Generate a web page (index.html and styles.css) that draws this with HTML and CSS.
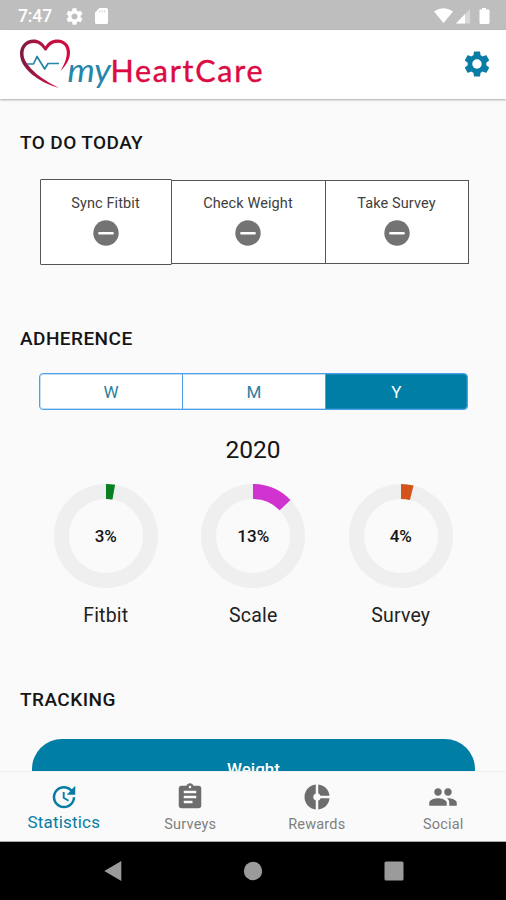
FILE: index.html
```html
<!DOCTYPE html>
<html lang="en">
<head>
<meta charset="utf-8">
<title>myHeartCare</title>
<link rel="stylesheet" href="styles.css">
</head>
<body>
<svg class="defs" width="0" height="0" aria-hidden="true">
  <symbol id="gear" viewBox="2 2 20 20"><path d="M19.14 12.94c.04-.3.06-.61.06-.94 0-.32-.02-.64-.07-.94l2.03-1.58c.18-.14.23-.41.12-.61l-1.92-3.32c-.12-.22-.37-.29-.59-.22l-2.39.96c-.5-.38-1.03-.7-1.62-.94l-.36-2.54c-.04-.24-.24-.41-.48-.41h-3.84c-.24 0-.43.17-.47.41l-.36 2.54c-.59.24-1.13.57-1.62.94l-2.39-.96c-.22-.08-.47 0-.59.22L2.74 8.87c-.12.21-.08.47.12.61l2.03 1.58c-.05.3-.09.63-.09.94s.02.64.07.94l-2.03 1.58c-.18.14-.23.41-.12.61l1.92 3.32c.12.22.37.29.59.22l2.39-.96c.5.38 1.03.7 1.62.94l.36 2.54c.05.24.24.41.48.41h3.84c.24 0 .44-.17.47-.41l.36-2.54c.59-.24 1.13-.56 1.62-.94l2.39.96c.22.08.47 0 .59-.22l1.92-3.32c.12-.22.07-.47-.12-.61l-2.01-1.58zM12 15.600c-1.980 0-3.600-1.620-3.600-3.600s1.620-3.600 3.600-3.600 3.600 1.620 3.600 3.600-1.620 3.600-3.600 3.600z"/></symbol>
  <symbol id="minus" viewBox="0 0 26 26"><circle cx="13" cy="13" r="12.700" fill="#737373"/><path d="M6.500 13.200h13" stroke="#fff" stroke-width="2.600" stroke-linecap="round"/></symbol>
</svg>
<div class="screen">
  <div class="status">
    <span class="time">7:47</span>
    <svg class="s-gear"><use href="#gear"/></svg>
    <svg class="s-card" viewBox="0 0 13 16"><path d="M4.500 0H11.500Q13 0 13 1.500V14.500Q13 16 11.500 16H1.500Q0 16 0 14.500V4.500Z"/><path d="M4.800 2v2.600M7.200 2v2.600M9.600 2v2.600" stroke="#bebebe" stroke-width="1.100" opacity=".5"/></svg>
    <svg class="s-signals" viewBox="0 0 57 16"><path d="M0 3.500Q9.500-3 19 3.500L9.500 15Z"/><path d="M22 15.500 36 1V15.500Z" opacity=".4"/><path d="M22 15.500 31 6V15.500Z"/><path d="M45.500 2Q45.500 1.500 46 1.500H48V0h4v1.500h2.500Q55.500 1.500 55.500 2.500V14.500Q55.500 16 54 16H47Q45.500 16 45.500 14.500Z"/></svg>
  </div>
  <header class="header">
    <svg class="logo" viewBox="0 0 246 56">
      <defs><linearGradient id="hg" x1="0" x2="1"><stop offset="0" stop-color="#7d1a40"/><stop offset=".5" stop-color="#b8143f"/><stop offset="1" stop-color="#d8083f"/></linearGradient></defs>
      <path fill="url(#hg)" d="M25.300 8.500C22 3.500 18 1.400 13.500 1.500 6 1.600 0 7.500 0 15.500c0 8 4.500 14.500 12 21 7.500 6 16.500 10.500 27 13.500C29.500 45 20 39.500 13.500 33 7 26.500 3.500 21.500 3.500 15.500 3.500 9 8 5 13.500 5c5.500 0 8.500 3.500 11.300 7.500h1.500C29 8 32.500 4.700 38 4.700c5.500 0 8.800 4.300 8.800 9.800 0 6-2.300 11.500-6.300 18.500C46 27.500 50 21.500 50 14.500 50 7 45 1.500 37.500 1.500 32 1.500 28 4 25.300 8.500Z"/>
      <path class="pulse" d="M7 26h6.500L17 18.500 24.700 31l3.300-5.500h11"/>
      <text class="my" x="47.500" y="43.500" textLength="43.500" lengthAdjust="spacingAndGlyphs">my</text>
      <text class="hc" x="90.500" y="43.500" textLength="152" lengthAdjust="spacing">HeartCare</text>
    </svg>
    <svg class="settings"><use href="#gear"/></svg>
  </header>
  <main class="content">
    <h2 class="today">TO DO TODAY</h2>
    <div class="todo">
      <div class="task first"><span>Sync Fitbit</span><svg><use href="#minus"/></svg></div>
      <div class="task second"><span>Check Weight</span><svg><use href="#minus"/></svg></div>
      <div class="task third"><span>Take Survey</span><svg><use href="#minus"/></svg></div>
    </div>
    <h2 class="adherence">ADHERENCE</h2>
    <div class="segments"><span>W</span><span>M</span><span class="active">Y</span></div>
    <div class="year">2020</div>
    <div class="rings">
      <div class="ring-item">
        <div class="ring"><svg viewBox="0 0 104 104"><circle class="track" cx="52" cy="52" r="44.500"/><circle class="arc green" cx="52" cy="52" r="44.500" pathLength="100" stroke-dasharray="2.800 100"/></svg><b>3%</b></div>
        <span>Fitbit</span>
      </div>
      <div class="ring-item">
        <div class="ring"><svg viewBox="0 0 104 104"><circle class="track" cx="52" cy="52" r="44.500"/><circle class="arc purple" cx="52" cy="52" r="44.500" pathLength="100" stroke-dasharray="12.800 100"/></svg><b>13%</b></div>
        <span>Scale</span>
      </div>
      <div class="ring-item">
        <div class="ring"><svg viewBox="0 0 104 104"><circle class="track" cx="52" cy="52" r="44.500"/><circle class="arc orange" cx="52" cy="52" r="44.500" pathLength="100" stroke-dasharray="3.900 100"/></svg><b>4%</b></div>
        <span>Survey</span>
      </div>
    </div>
    <h2 class="tracking">TRACKING</h2>
    <div class="weight">Weight</div>
  </main>
  <nav class="tabs">
    <div class="tab on"><svg viewBox="0 0 24 24"><path d="M21 10.120h-6.780l2.740-2.820c-2.730-2.700-7.150-2.800-9.880-.1-2.730 2.710-2.730 7.080 0 9.790s7.150 2.710 9.880 0C18.320 15.650 19 14.080 19 12.100h2c0 1.980-.88 4.550-2.640 6.290-3.510 3.480-9.210 3.480-12.720 0-3.500-3.470-3.530-9.110-.02-12.580s9.140-3.470 12.650 0L21 3v7.120zM12.500 8v4.250l3.500 2.080-.72 1.210L11 13V8h1.500z"/></svg><span>Statistics</span></div>
    <div class="tab"><svg viewBox="0 0 24 24"><path d="M19 3h-4.180C14.400 1.840 13.300 1 12 1c-1.300 0-2.400.84-2.820 2H5c-1.100 0-2 .9-2 2v14c0 1.100.9 2 2 2h14c1.100 0 2-.9 2-2V5c0-1.100-.9-2-2-2zm-7 0c.55 0 1 .45 1 1s-.45 1-1 1-1-.45-1-1 .45-1 1-1zm2 14H7v-2h7v2zm3-4H7v-2h10v2zm0-4H7V7h10v2z"/></svg><span>Surveys</span></div>
    <div class="tab"><svg viewBox="0 0 24 24"><path d="M11 9.160V2c-5 .5-9 4.790-9 10s4 9.500 9 10v-7.160c-1-.41-2-1.520-2-2.840s1-2.430 2-2.840zM14.860 11H22c-.48-4.750-4-8.530-9-9v7.160c1 .3 1.520.98 1.860 1.840zM13 14.840V22c5-.47 8.520-4.250 9-9h-7.140c-.34.86-.86 1.540-1.860 1.840z"/></svg><span>Rewards</span></div>
    <div class="tab"><svg viewBox="0 0 24 24"><path d="M16 11c1.660 0 2.990-1.340 2.990-3S17.660 5 16 5c-1.660 0-3 1.340-3 3s1.340 3 3 3zm-8 0c1.660 0 2.990-1.340 2.990-3S9.660 5 8 5C6.340 5 5 6.340 5 8s1.340 3 3 3zm0 2c-2.330 0-7 1.170-7 3.500V19h14v-2.500c0-2.330-4.670-3.500-7-3.500zm8 0c-.29 0-.62.02-.97.05 1.160.84 1.970 1.970 1.970 3.450V19h6v-2.500c0-2.330-4.670-3.500-7-3.500z"/></svg><span>Social</span></div>
  </nav>
  <div class="navbar">
    <svg viewBox="0 0 20 22"><path d="M1.300 11 18.300 1V21Z"/></svg>
    <svg viewBox="0 0 20 22"><circle cx="10" cy="11" r="9.200"/></svg>
    <svg viewBox="0 0 20 22"><rect x=".5" y="1.500" width="19" height="19" rx="1.500"/></svg>
  </div>
</div>
</body>
</html>
```
FILE: styles.css
```css
* { box-sizing: border-box; }
body { margin: 0; font-family: Roboto, "Liberation Sans", sans-serif; color: #151515; }
.defs { position: absolute; }
svg { display: block; flex: none; }
.screen { width: 506px; height: 900px; display: flex; flex-direction: column; background: #fafafa; overflow: hidden; }
.status { height: 30px; flex: none; background: #bebebe; display: flex; align-items: center; padding: 2px 13px 0 18px; fill: #fff; color: #fff; }
.time { width: 48px; font-size: 17.500px; font-weight: 500; letter-spacing: -.1px; }
.s-gear { width: 17px; height: 17px; }
.s-card { width: 13px; height: 16px; margin-left: 12px; }
.s-signals { width: 57px; height: 16px; margin-left: auto; margin-right: 2px; }
.header { height: 69px; flex: none; background: #fff; display: flex; justify-content: space-between; padding: 8px 16px 0 20px; box-shadow: 0 1px 2px rgba(0,0,0,.32); z-index: 1; }
.logo { width: 246px; height: 56px; }
.pulse { fill: none; stroke: #2685a8; stroke-width: 1.700; stroke-linejoin: round; }
.my { font: italic 400 32px Lato, sans-serif; fill: #2685a8; }
.hc { font: 400 30.500px Lato, sans-serif; fill: #dc0a42; stroke: #dc0a42; stroke-width: .4px; }
.settings { width: 26px; height: 26px; margin-top: 13px; fill: #087ca4; }
.content { flex: 1; min-height: 0; overflow: hidden; padding-top: 31px; }
h2 { margin: 0 0 0 20px; font-size: 19px; line-height: 26px; height: 26px; font-weight: 500; letter-spacing: .45px; }
.today { letter-spacing: .4px; }
.todo { display: grid; grid-template-columns: 132px 154px 143px; align-items: center; margin: 23px 0 0 39.500px; height: 86px; }
.task { height: 84px; background: #fff; border: 1px solid #555; border-left: 0; display: flex; flex-direction: column; align-items: center; justify-content: center; gap: 8px; padding-bottom: 3px; }
.task.first { height: 86px; border-left: 1px solid #555; border-radius: 1px; }
.task span { font-size: 14.500px; line-height: 17px; letter-spacing: .1px; color: #404040; }
.task svg { width: 26px; height: 26px; }
.adherence { margin-top: 61px; }
.segments { margin: 21px 38px 0 39px; height: 37px; display: grid; grid-template-columns: repeat(3, 1fr); border: 1px solid #4ba0e8; outline: 1px solid #4ba0e855; outline-offset: -2px; border-radius: 4px; overflow: hidden; background: #fff; color: #2b7fa0; font-size: 17px; line-height: 36px; text-align: center; }
.segments span + span { border-left: 1px solid #4ba0e8; }
.segments .active { background: #007ea5; color: #fff; }
.year { margin-top: 24px; text-align: center; font-size: 24.500px; line-height: 32px; }
.rings { margin: 18px 32px 0; display: grid; grid-template-columns: repeat(3, 147.500px); }
.ring-item { display: flex; flex-direction: column; align-items: center; font-size: 19.500px; line-height: 24px; letter-spacing: .2px; gap: 16px; color: #222; }
.ring { width: 104px; height: 104px; display: grid; place-items: center; }
.ring > * { grid-area: 1 / 1; }
.ring b { font-size: 17px; font-weight: 500; letter-spacing: 0; color: #151515; }
.ring svg { width: 104px; height: 104px; transform: rotate(-90deg); }
.ring circle { fill: none; stroke-width: 15px; }
.track { stroke: #efefef; }
.green { stroke: #098020; }
.purple { stroke: #d133d1; }
.orange { stroke: #d4531b; }
.tracking { margin-top: 59px; }
.weight { margin: 26px 31px 0 32px; height: 60px; border-radius: 30px; background: #007ea5; color: #fff; font-size: 17px; font-weight: 500; line-height: 60px; text-align: center; }
.tabs { height: 71px; flex: none; border-top: 1px solid #eee; border-bottom: 1px solid #aaa; display: grid; grid-template-columns: repeat(4, 1fr); background: #fafafa; fill: #6d6d6d; color: #808080; }
.tab { display: flex; flex-direction: column; align-items: center; padding: 10px 0 0 1px; font-size: 14.500px; line-height: 19px; letter-spacing: .2px; gap: 3px; }
.tab svg { width: 30px; height: 30px; }
.tab.on { fill: #087ca4; color: #087ca4; font-size: 17px; gap: 1px; }
.navbar { height: 58px; flex: none; background: #000; fill: #9b9b9b; display: grid; grid-template-columns: repeat(3, 140.500px); justify-content: center; justify-items: center; align-items: center; }
.navbar svg { width: 20px; height: 22px; }
```
